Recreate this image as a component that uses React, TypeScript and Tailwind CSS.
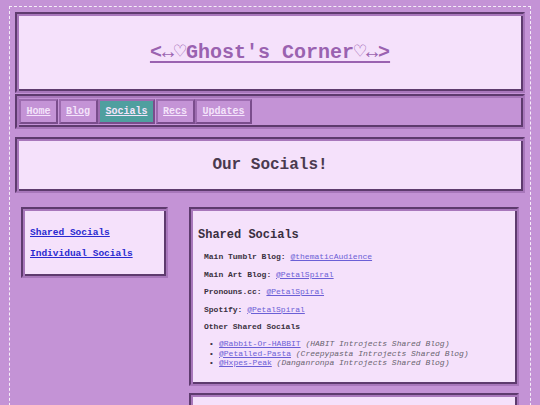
const groove =
  "border-2 border-t-[#5e3b6e] border-l-[#5e3b6e] border-r-[#a877bb] border-b-[#a877bb] shadow-[inset_2px_2px_0_#a877bb,inset_-2px_-2px_0_#5e3b6e]";

const navItems = ["Home", "Blog", "Socials", "Recs", "Updates"];

const rows = [
  { label: "Main Tumblr Blog:", handle: "@thematicAudience" },
  { label: "Main Art Blog:", handle: "@PetalSpiral" },
  { label: "Pronouns.cc:", handle: "@PetalSpiral" },
  { label: "Spotify:", handle: "@PetalSpiral" },
];

const shared = [
  { handle: "@Rabbit-Or-HABBIT", note: "(HABIT Introjects Shared Blog)" },
  { handle: "@Petalled-Pasta", note: "(Creepypasta Introjects Shared Blog)" },
  { handle: "@Hxpes-Peak", note: "(Danganronpa Introjects Shared Blog)" },
];

export default function App() {
  return (
    <div className="h-[405px] overflow-hidden bg-[#c493d6] px-[9px] pt-[6px] font-['Liberation_Mono','DejaVu_Sans_Mono',monospace]">
      <div className="h-[420px] border border-b-0 border-dashed border-white/85 px-[5px] pt-[5px]">
        <header className={`flex h-[81px] items-center justify-center bg-[#f5e1fb] ${groove}`}>
          <a href="#" className="text-[20px] font-bold text-[#9a62b0] underline decoration-2 underline-offset-[3px]">
            &lt;↔♡Ghost's Corner♡↔&gt;
          </a>
        </header>

        <nav className={`mt-[1px] flex h-[35px] items-center gap-[0.5px] bg-[#c493d6] px-[2px] ${groove}`}>
          {navItems.map((item) => (
            <a
              key={item}
              href="#"
              className={`flex h-[25px] items-center border-2 border-t-[#9d6cb0] border-l-[#9d6cb0] border-r-[#7a4d8c] border-b-[#7a4d8c] px-[5.5px] text-[10px] font-bold text-[#f4e4fb] underline ${
                item === "Socials" ? "bg-[#4f9f9f]" : "bg-[#c493d6]"
              }`}
            >
              {item}
            </a>
          ))}
        </nav>

        <section className={`mt-[8px] flex h-[56px] items-center justify-center bg-[#f5e1fb] ${groove}`}>
          <h1 className="text-[16px] font-bold text-[#4a3a4f]">Our Socials!</h1>
        </section>

        <div className="mt-[14px] flex items-start gap-[21px] px-[6px]">
          <aside className={`flex w-[147px] shrink-0 flex-col gap-[9px] bg-[#f5e1fb] px-[7px] pb-[16px] pt-[18px] ${groove}`}>
            <a href="#" className="text-[9.5px] font-bold leading-[12px] text-[#2a2ad0] underline">
              Shared Socials
            </a>
            <a href="#" className="text-[9.5px] font-bold leading-[12px] text-[#2a2ad0] underline">
              Individual Socials
            </a>
          </aside>

          <div className="flex flex-1 flex-col gap-[7px]">
            <main className={`bg-[#f5e1fb] pb-[16px] pl-[7px] pr-[6px] pt-[18px] ${groove}`}>
              <h2 className="text-[12px] font-bold leading-[16px] text-[#3a2f3f]">Shared Socials</h2>
              <div className="mt-[9px] flex flex-col gap-[7.5px] pl-[6px] text-[8px] leading-[10px]">
                {rows.map((r) => (
                  <p key={r.label} className="font-bold text-[#3a3040]">
                    {r.label}{" "}
                    <a href="#" className="font-normal text-[#6b5fd6] underline">
                      {r.handle}
                    </a>
                  </p>
                ))}
                <p className="font-bold text-[#3a3040]">Other Shared Socials</p>
              </div>
              <ul className="mt-[7px] pl-[11px] text-[8px] leading-[9.5px]">
                {shared.map((s) => (
                  <li key={s.handle} className="flex whitespace-nowrap">
                    <span className="w-[10px] text-[#3a3040]">•</span>
                    <a href="#" className="text-[#6b5fd6] underline">
                      {s.handle}
                    </a>
                    <span className="ml-[4.8px] italic text-[#6a6470]">{s.note}</span>
                  </li>
                ))}
              </ul>
            </main>
            <div className={`h-[40px] bg-[#f5e1fb] ${groove}`} />
          </div>
        </div>
      </div>
    </div>
  );
}
